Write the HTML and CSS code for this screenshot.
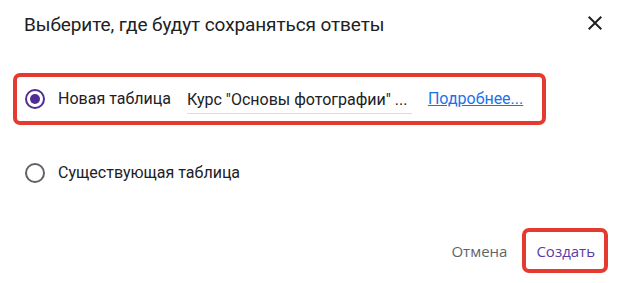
FILE: index.html
```html
<!DOCTYPE html>
<html lang="ru">
<head>
<meta charset="utf-8">
<link rel="stylesheet" href="styles.css">
</head>
<body>
<div class="dialog">
  <div class="header">
    <div class="title">Выберите, где будут сохраняться ответы</div>
    <button class="close" aria-label="Закрыть">
      <svg width="24" height="24" viewBox="0 0 24 24"><path d="M19 6.41 17.59 5 12 10.59 6.41 5 5 6.41 10.59 12 5 17.59 6.41 19 12 13.41 17.59 19 19 17.59 13.41 12z" fill="#202124"/></svg>
    </button>
  </div>
  <div class="options">
    <div class="highlight">
      <div class="row">
        <span class="radio checked"><span class="dot"></span></span>
        <span class="label">Новая таблица</span>
        <span class="input">Курс "Основы фотографии" ...</span>
        <a class="link" href="#">Подробнее...</a>
      </div>
    </div>
    <div class="row plain">
      <span class="radio"></span>
      <span class="label">Существующая таблица</span>
    </div>
  </div>
  <div class="footer">
    <button class="btn cancel">Отмена</button>
    <button class="btn create">Создать</button>
  </div>
</div>
</body>
</html>
```
FILE: styles.css
```css
html, body {
  margin: 0;
  padding: 0;
  background: #fff;
}
.dialog {
  width: 621px;
  height: 283px;
  display: flex;
  flex-direction: column;
  font-family: Roboto, "Noto Sans", sans-serif;
  color: #202124;
}
.header {
  display: flex;
  align-items: center;
  justify-content: space-between;
  padding: 12px 14px 0 24px;
  height: 26px;
}
.title {
  font-size: 19px;
  line-height: 26px;
  font-weight: 400;
  letter-spacing: -0.1px;
}
.close {
  border: 0;
  background: none;
  padding: 0;
  width: 24px;
  height: 24px;
  margin-top: -4px;
  display: flex;
  align-items: center;
  justify-content: center;
}
.close svg {
  width: 26px;
  height: 26px;
}
.options {
  margin-top: 35px;
  display: flex;
  flex-direction: column;
}
.highlight {
  margin: 0 13px;
  border: 4px solid #e53a30;
  border-radius: 7px;
  width: 525px;
}
.row {
  display: flex;
  align-items: center;
  height: 44px;
  padding-left: 8px;
  font-size: 16px;
  line-height: 20px;
}
.row.plain {
  padding-left: 25px;
  margin-top: 26px;
}
.radio {
  box-sizing: border-box;
  width: 20px;
  height: 20px;
  border: 2px solid #5f6368;
  border-radius: 50%;
  display: flex;
  align-items: center;
  justify-content: center;
  flex: none;
}
.radio.checked {
  border-color: #4f2d94;
}
.dot {
  width: 10px;
  height: 10px;
  border-radius: 50%;
  background: #4f2d94;
}
.label {
  margin-left: 13px;
  color: #202124;
}
.input {
  margin-left: 16px;
  width: 225px;
  box-sizing: border-box;
  padding-top: 2px;
  height: 30px;
  border-bottom: 1px solid #dadce0;
  display: flex;
  align-items: center;
  color: #202124;
  white-space: nowrap;
  overflow: hidden;
}
.link {
  margin-left: 16px;
  color: #1a73e8;
  text-decoration: underline;
  font-size: 16px;
}
.footer {
  margin-top: auto;
  display: flex;
  justify-content: flex-end;
  align-items: center;
  padding: 0 13px 10px 0;
}
.btn {
  border: 0;
  background: none;
  font-family: "Open Sans", Roboto, sans-serif;
  font-weight: 500;
  font-size: 15px;
  letter-spacing: 0;
  height: 37px;
  padding: 0 8px;
  cursor: pointer;
}
.cancel {
  color: #5f6368;
  margin-right: 7px;
}
.create {
  color: #5b3aa8;
  border: 4px solid #e53a30;
  border-radius: 7px;
  height: 45px;
  padding: 0 9px 0 10px;
}
```
